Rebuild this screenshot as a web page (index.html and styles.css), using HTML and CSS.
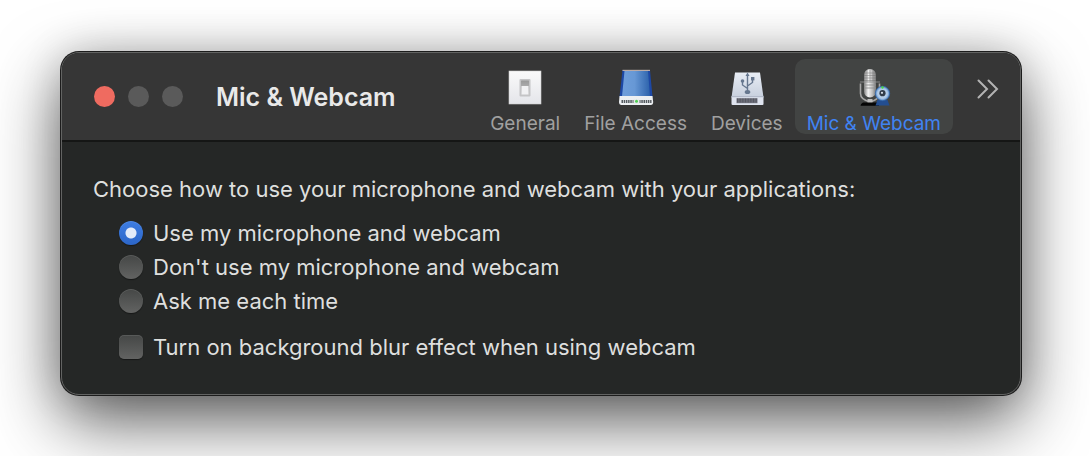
FILE: index.html
```html
<!DOCTYPE html>
<html lang="en">
<head>
<meta charset="utf-8">
<meta name="viewport" content="width=device-width, initial-scale=1">
<title>Mic &amp; Webcam</title>
<link rel="stylesheet" href="styles.css">
</head>
<body>
<main class="window">
  <header class="titlebar">
    <div class="lights">
      <button class="light light-close" aria-label="Close"></button>
      <button class="light" aria-label="Minimize"></button>
      <button class="light" aria-label="Zoom"></button>
    </div>
    <h1 class="title">Mic &amp; Webcam</h1>
    <nav class="toolbar">
      <button class="tool">
        <svg class="tool-icon" viewBox="0 0 38 38" aria-hidden="true">
          <defs>
            <linearGradient id="plate" x1="0" y1="0" x2="0" y2="1"><stop offset="0" stop-color="#fafafa"/><stop offset="1" stop-color="#e4e5ea"/></linearGradient>
            <linearGradient id="rocker" x1="0" y1="0" x2="0" y2="1"><stop offset="0" stop-color="#999"/><stop offset="1" stop-color="#c6c6c8"/></linearGradient>
          </defs>
          <rect x="3" y="3" width="32" height="33" fill="url(#plate)" stroke="#cfcfcf" stroke-width=".6"/>
          <rect x="13.500" y="11" width="11" height="17.500" rx="1" fill="#c4c4c6"/>
          <rect x="15" y="12.500" width="8" height="14.500" rx=".5" fill="url(#rocker)"/>
          <rect x="15.500" y="18" width="7" height="8.500" fill="#f1f1f3"/>
        </svg>
        <span>General</span>
      </button>
      <button class="tool">
        <svg class="tool-icon" viewBox="0 0 38 38" aria-hidden="true">
          <defs>
            <linearGradient id="disk" x1="0" y1="0" x2="1" y2="0"><stop offset="0" stop-color="#6f9edb"/><stop offset=".45" stop-color="#6798d5"/><stop offset="1" stop-color="#2c62ab"/></linearGradient>
          </defs>
          <path d="M5.500 2h27.500l2.500 27H2.500z" fill="#1d48a5"/>
          <path d="M7.500 3h23.500l2 25.500H5z" fill="url(#disk)"/>
          <path d="M5.500 1.800h27.500v1.200H5.500z" fill="#b9aba8"/>
          <path d="M2.500 28h33l.7 6q0 3-2.500 3H4.500Q2 37 2 34z" fill="#eceff2"/>
          <path d="M4.500 33.500h30" stroke="#555b60" stroke-width="3" stroke-dasharray="1.500 .7"/>
          <path d="M16.500 31.500h6v4h-6z" fill="#e5e9ea"/>
          <circle cx="19.500" cy="33.300" r="1.500" fill="#50cf53"/>
        </svg>
        <span>File Access</span>
      </button>
      <button class="tool">
        <svg class="tool-icon" viewBox="0 0 38 38" aria-hidden="true">
          <defs>
            <linearGradient id="drive" x1="0" y1="0" x2="0" y2="1"><stop offset="0" stop-color="#e8edf5"/><stop offset="1" stop-color="#c7cfdd"/></linearGradient>
          </defs>
          <path d="M7 4.500h25l3.500 25h-32z" fill="url(#drive)"/>
          <path d="M3.500 28.500h32V36q0 1-1 1h-30q-1 0-1-1z" fill="#dfe4ef"/>
          <path d="M3.500 28.700h32" stroke="#aab2c2"/>
          <path d="M8.500 30.200h21v5h-21z" fill="#777984"/>
          <path d="M9 32.500h20" stroke="#565863" stroke-width="4" stroke-dasharray="1 .6"/>
          <g fill="none" stroke="#66778f" stroke-width="1.400">
            <path d="M19.500 7v17M19.500 20.500l-5-3.500v-4M19.500 18l5-3.500v-3"/>
          </g>
          <path d="M19.500 4.500l2 3.500h-4z" fill="#66778f"/>
          <circle cx="14.500" cy="13" r="1.800" fill="#66778f"/>
          <path d="M23 9h3.400v3.400H23z" fill="#66778f"/>
          <ellipse cx="19.500" cy="24" rx="2.800" ry="2" fill="#66778f"/>
        </svg>
        <span>Devices</span>
      </button>
      <button class="tool tool-active" aria-current="page">
        <svg class="tool-icon" viewBox="0 0 38 38" aria-hidden="true">
          <defs>
            <linearGradient id="mic" x1="0" y1="0" x2="1" y2="0"><stop offset="0" stop-color="#808080"/><stop offset=".35" stop-color="#f4f4f4"/><stop offset=".7" stop-color="#bdbdbd"/><stop offset="1" stop-color="#777"/></linearGradient>
            <radialGradient id="cam"><stop offset="0" stop-color="#dbe9f5"/><stop offset=".7" stop-color="#a9c6e6"/><stop offset="1" stop-color="#4c83c6"/></radialGradient>
          </defs>
          <path d="M5.500 15.500v10q0 6 9.500 8.500 9.500-2.500 9.500-8.500v-10" fill="none" stroke="#a6a6a6" stroke-width="1.600"/>
          <path d="M12.500 31h5v4h-5z" fill="#bbb"/>
          <path d="M8 34.500h16v3.200H5.500q0-2 2.500-3.200z" fill="#050505"/>
          <rect x="9" y="1" width="12" height="28.500" rx="6" fill="url(#mic)"/>
          <path d="M9.500 5h11M9 7.500h12M9 10h12M9 12.500h12M12 2v11.500M15 1v12.500M18 2v11.500" stroke="#696969" stroke-width=".6" opacity=".75"/>
          <path d="M5 14h20M9 17h12M9 20h12" stroke="#8e8e8e" stroke-width=".9"/>
          <path d="M22.500 32h10l2 5.500h-14z" fill="#234e91"/>
          <circle cx="27.500" cy="25.500" r="7.200" fill="url(#cam)" stroke="#3467a8" stroke-width=".7"/>
          <circle cx="27.500" cy="25.200" r="3.100" fill="#303c4a"/>
          <circle cx="27" cy="24.800" r="1.100" fill="#d9e2ea"/>
          <circle cx="27.500" cy="19.500" r="1.200" fill="#4bd844"/>
        </svg>
        <span>Mic &amp; Webcam</span>
      </button>
    </nav>
    <button class="more" aria-label="More toolbar items">
      <svg class="more-icon" viewBox="0 0 22 20" aria-hidden="true"><path d="M1.500 1.500L10 10l-8.500 8.500M11.500 1.500L20 10l-8.500 8.500"/></svg>
    </button>
  </header>
  <form class="content">
    <fieldset class="choices">
      <legend class="prompt">Choose how to use your microphone and webcam with your applications:</legend>
      <label class="option"><input class="control radio" type="radio" name="access" checked>Use my microphone and webcam</label>
      <label class="option"><input class="control radio" type="radio" name="access">Don't use my microphone and webcam</label>
      <label class="option"><input class="control radio" type="radio" name="access">Ask me each time</label>
    </fieldset>
    <label class="option option-blur"><input class="control checkbox" type="checkbox">Turn on background blur effect when using webcam</label>
  </form>
</main>
</body>
</html>
```
FILE: styles.css
```css
* {
  box-sizing: border-box;
}

html {
  min-height: 100%;
  background: #fff;
}

body {
  margin: 0;
  padding: 52px 69px 61px 61px;
  overflow: hidden;
  font-family: Inter, "Liberation Sans", sans-serif;
  color: #dedfde;
}

button {
  border: 0;
  padding: 0;
  background: none;
  font: inherit;
}

.window {
  border: 1px solid #626362;
  border-radius: 18px;
  background: #252726;
  box-shadow: 0 0 0 1px #1c1c1c, 0 26px 68px rgba(0, 0, 0, 0.64), 0 0 40px rgba(0, 0, 0, 0.16);
}

.titlebar {
  display: flex;
  align-items: center;
  height: 89px;
  padding: 0 21px 0 32px;
  border-bottom: 2px solid #151615;
  border-radius: 17px 17px 0 0;
  background: #363636;
}

.lights {
  display: flex;
  gap: 13px;
}

.light {
  width: 21px;
  height: 21px;
  border-radius: 50%;
  background: #5a5a5a;
}

.light-close {
  background: #ef6b60;
}

.title {
  flex: 1;
  margin: 0 0 0 33px;
  font-size: 25px;
  font-weight: 600;
  line-height: 32px;
  white-space: nowrap;
  color: #e9e9e9;
}

.toolbar {
  display: flex;
}

.tool {
  display: flex;
  flex-direction: column;
  align-items: center;
  gap: 8px;
  height: 75px;
  padding: 9px 12px 0;
  border-radius: 10px;
  font-size: 19px;
  line-height: 20px;
  white-space: nowrap;
  color: #a0a0a0;
}

.tool-active {
  background: #424443;
  color: #4083f2;
}

.tool-icon {
  width: 38px;
  height: 38px;
}

.more {
  display: flex;
  margin-left: 24px;
  padding-bottom: 16px;
}

.more-icon {
  width: 22px;
  height: 20px;
  fill: none;
  stroke: #b3b3b3;
  stroke-width: 2;
  stroke-linecap: round;
}

.content {
  padding: 30px 31px;
  font-size: 22px;
  line-height: 34px;
}

.choices {
  margin: 0;
  padding: 0;
  border: 0;
}

.prompt {
  padding: 0 0 10px;
}

.option {
  display: flex;
  align-items: center;
  gap: 10px;
  padding-left: 26px;
}

.option-blur {
  margin-top: 12px;
}

.control {
  appearance: none;
  flex: none;
  width: 24px;
  height: 24px;
  margin: 0;
  background: linear-gradient(#454746, #626362);
  box-shadow: 0 1px 1px rgba(0, 0, 0, 0.4), inset 0 1px 0 rgba(255, 255, 255, 0.1);
}

.radio {
  border-radius: 50%;
}

.radio:checked {
  background: radial-gradient(circle, #e3ebf9 5px, transparent 6px), linear-gradient(#3e7de2, #2c66c8);
}

.checkbox {
  border-radius: 5px;
}

.checkbox:checked {
  background: #3572d8;
}
```
